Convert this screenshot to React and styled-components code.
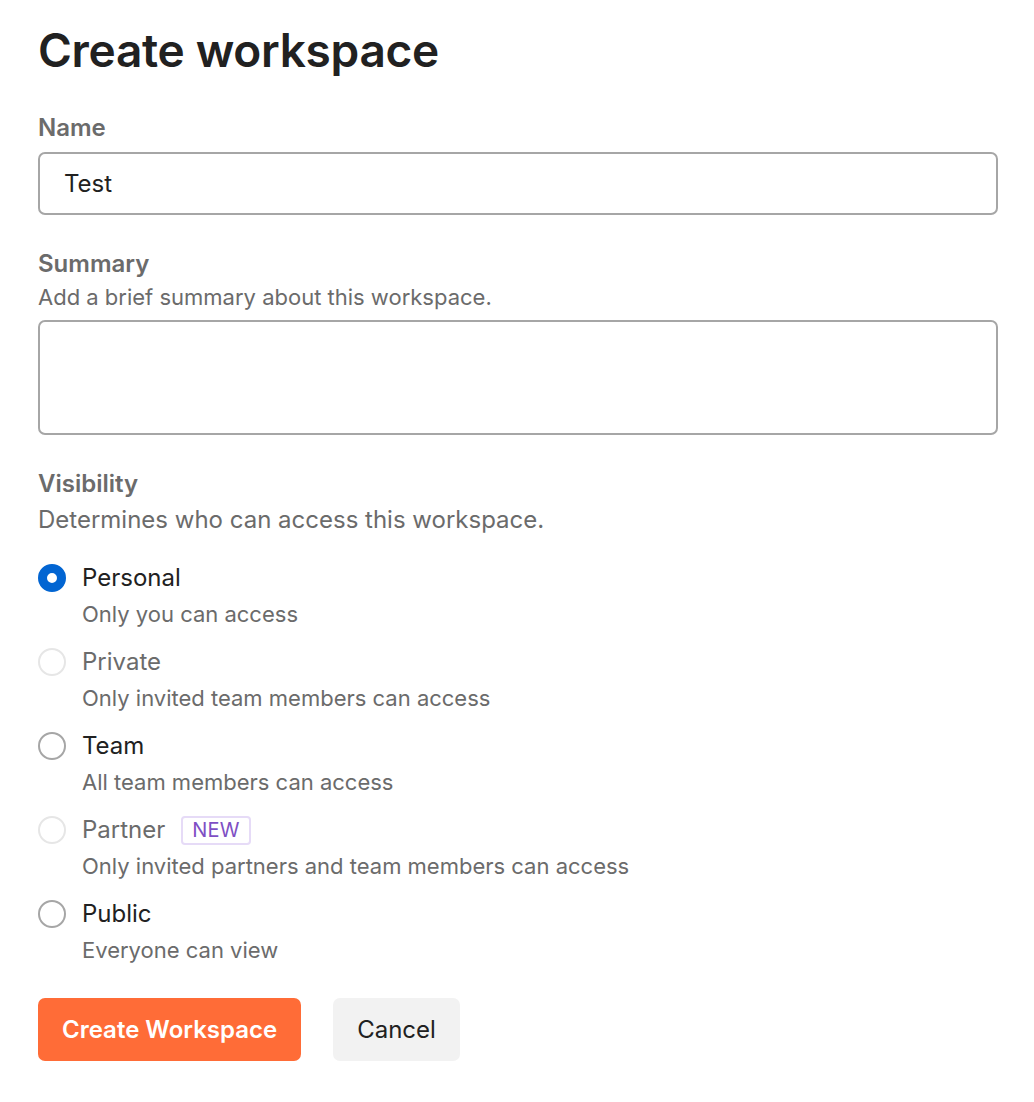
import React, { useState } from "react";
import styled, { createGlobalStyle } from "styled-components";

const GlobalStyle = createGlobalStyle`
  body {
    margin: 0;
    background: #ffffff;
    font-family: Inter, "Noto Sans", sans-serif;
    color: #212121;
  }
`;

const Page = styled.div`
  padding: 22px 36px 40px 38px;
  display: flex;
  flex-direction: column;
`;

const Title = styled.h1`
  margin: 0 0 35px;
  font-size: 46px;
  font-weight: 600;
  line-height: 56px;
  letter-spacing: -0.3px;
  color: #212121;
`;

const Field = styled.div`
  display: flex;
  flex-direction: column;
  margin-bottom: ${(p) => p.$gap || 0}px;
`;

const Label = styled.label`
  font-size: 24px;
  font-weight: 600;
  line-height: 30px;
  color: #6b6b6b;
`;

const Help = styled.div`
  margin-top: ${(p) => p.$top || 0}px;
  margin-bottom: ${(p) => p.$gap || 0}px;
  font-size: ${(p) => p.$size || 22}px;
  line-height: 30px;
  color: #6b6b6b;
`;

const TextInput = styled.input`
  margin-top: 9px;
  box-sizing: border-box;
  width: 960px;
  height: 63px;
  border: 2px solid #a6a6a6;
  border-radius: 7px;
  padding: 0 24px;
  font-family: inherit;
  font-size: 24px;
  color: #212121;
  outline: none;
`;

const TextArea = styled.textarea`
  margin-top: 8px;
  box-sizing: border-box;
  width: 960px;
  height: 115px;
  border: 2px solid #a6a6a6;
  border-radius: 7px;
  padding: 14px 24px;
  font-family: inherit;
  font-size: 24px;
  resize: none;
  outline: none;
`;

const Options = styled.div`
  display: flex;
  flex-direction: column;
  gap: 18px;
`;

const Option = styled.div`
  display: grid;
  grid-template-columns: 44px 1fr;
  row-gap: 6px;
  cursor: pointer;
`;

const Radio = styled.span`
  box-sizing: border-box;
  width: 28px;
  height: 28px;
  border-radius: 50%;
  align-self: center;
  border: ${(p) =>
    p.$checked ? "9px solid #0265d2" : p.$disabled ? "2px solid #e6e6e6" : "2px solid #a6a6a6"};
  background: #fff;
`;

const OptionTitle = styled.div`
  display: flex;
  align-items: center;
  gap: 16px;
  font-size: 24px;
  line-height: 30px;
  color: ${(p) => (p.$disabled ? "#6b6b6b" : "#212121")};
`;

const OptionDesc = styled.div`
  grid-column: 2;
  font-size: 22px;
  line-height: 30px;
  color: #6b6b6b;
`;

const Badge = styled.span`
  display: inline-flex;
  align-items: center;
  height: 29px;
  box-sizing: border-box;
  padding: 0 9px;
  border: 2px solid #e6dbf7;
  border-radius: 4px;
  font-size: 20px;
  color: #7e4fc4;
  letter-spacing: 0.2px;
`;

const Actions = styled.div`
  display: flex;
  gap: 32px;
  margin-top: 33px;
`;

const Button = styled.button`
  height: 63px;
  border: none;
  border-radius: 7px;
  padding: 0 24px;
  font-family: inherit;
  font-size: 24px;
  font-weight: ${(p) => (p.$primary ? 600 : 400)};
  background: ${(p) => (p.$primary ? "#ff6c37" : "#f2f2f2")};
  color: ${(p) => (p.$primary ? "#ffffff" : "#212121")};
  cursor: pointer;
`;

const options = [
  { id: "personal", title: "Personal", desc: "Only you can access" },
  { id: "private", title: "Private", desc: "Only invited team members can access", disabled: true },
  { id: "team", title: "Team", desc: "All team members can access" },
  { id: "partner", title: "Partner", desc: "Only invited partners and team members can access", disabled: true, badge: "NEW" },
  { id: "public", title: "Public", desc: "Everyone can view" },
];

export default function App() {
  const [name, setName] = useState("Test");
  const [visibility, setVisibility] = useState("personal");

  return (
    <Page>
      <GlobalStyle />
      <Title>Create workspace</Title>
      <Field $gap={34}>
        <Label>Name</Label>
        <TextInput value={name} onChange={(e) => setName(e.target.value)} />
      </Field>
      <Field $gap={34}>
        <Label>Summary</Label>
        <Help $top={3}>Add a brief summary about this workspace.</Help>
        <TextArea />
      </Field>
      <Field>
        <Label>Visibility</Label>
        <Help $size={24} $top={6} $gap={28}>Determines who can access this workspace.</Help>
        <Options>
          {options.map((o) => (
            <Option key={o.id} onClick={() => !o.disabled && setVisibility(o.id)}>
              <Radio $checked={visibility === o.id} $disabled={o.disabled} />
              <OptionTitle $disabled={o.disabled}>
                {o.title}
                {o.badge && <Badge>{o.badge}</Badge>}
              </OptionTitle>
              <OptionDesc>{o.desc}</OptionDesc>
            </Option>
          ))}
        </Options>
      </Field>
      <Actions>
        <Button $primary>Create Workspace</Button>
        <Button>Cancel</Button>
      </Actions>
    </Page>
  );
}
